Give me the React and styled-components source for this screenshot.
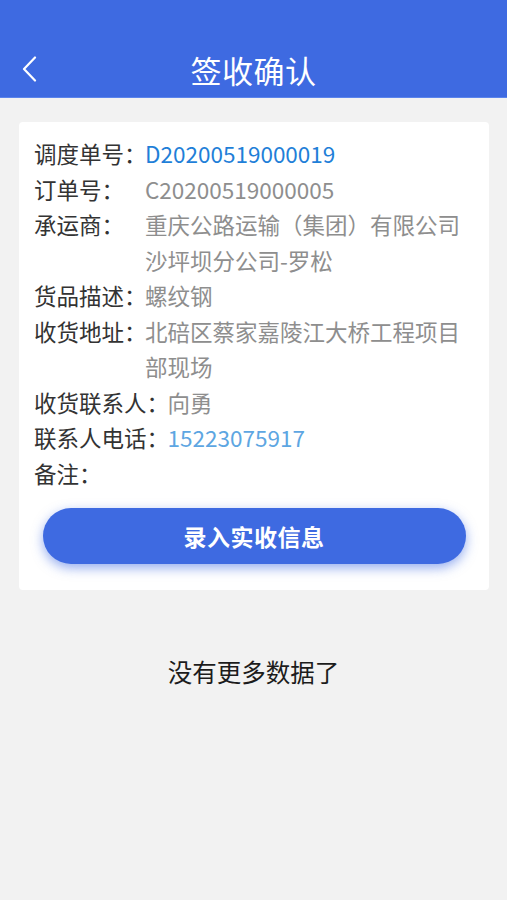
import React from "react";
import styled, { createGlobalStyle } from "styled-components";

const Global = createGlobalStyle`
  html, body { margin: 0; padding: 0; background: #f2f2f2; }
  body { font-family: "Noto Sans CJK SC", "Noto Sans", sans-serif; }
`;

const Page = styled.div`
  min-height: 900px;
  background: #f2f2f2;
`;

const Header = styled.header`
  background: #3e6ae1;
  padding-top: 41px;
  border-bottom: 1px solid #5b84ec;
`;

const TitleBar = styled.div`
  position: relative;
  height: 56px;
  display: flex;
  align-items: center;
  justify-content: center;
`;

const Title = styled.h1`
  margin: 0;
  color: #fff;
  font-size: 31px;
  font-weight: 400;
  letter-spacing: 0.5px;
`;

const Back = styled.button`
  position: absolute;
  left: 14px;
  top: 50%;
  transform: translateY(-50%);
  background: none;
  border: none;
  padding: 0 6px;
  display: flex;
`;

const Card = styled.section`
  margin: 24px 18px 0 19px;
  background: #fff;
  border-radius: 4px;
  padding: 14px 15px 26px 15px;
`;

const Row = styled.div`
  display: flex;
  font-size: 22.5px;
  line-height: 35.5px;
`;

const Label = styled.span`
  min-width: 112.5px;
  margin-right: -1.5px;
  color: #333;
  white-space: nowrap;
  flex-shrink: 0;
`;

const Value = styled.span`
  color: ${(p) => p.$color || "#8e8e8e"};
  flex: 1;
  word-break: break-all;
`;

const Button = styled.button`
  display: block;
  width: 423px;
  height: 56px;
  margin: 17px auto 0;
  border: none;
  border-radius: 28px;
  background: #3e6ae1;
  color: #fff;
  font-family: inherit;
  font-size: 23px;
  font-weight: 700;
  letter-spacing: 0.5px;
  box-shadow: 0 4px 12px rgba(62, 106, 225, 0.55);
`;

const Empty = styled.p`
  margin: 64px 0 0;
  text-align: center;
  font-size: 24.5px;
  color: #1c1c1c;
`;

const rows = [
  ["调度单号：", "D20200519000019", "#1f7fd8"],
  ["订单号：", "C20200519000005"],
  ["承运商：", "重庆公路运输（集团）有限公司沙坪坝分公司-罗松"],
  ["货品描述：", "螺纹钢"],
  ["收货地址：", "北碚区蔡家嘉陵江大桥工程项目部现场"],
  ["收货联系人：", "向勇"],
  ["联系人电话：", "15223075917", "#5da6e2"],
  ["备注：", ""],
];

export default function App() {
  return (
    <Page>
      <Global />
      <Header>
        <TitleBar>
          <Back aria-label="back">
            <svg width="18" height="26" viewBox="0 0 18 26">
              <path d="M15 1.5 L4 13 L15 24.5" fill="none" stroke="#fff" strokeWidth="2.2" strokeLinecap="round" strokeLinejoin="round" />
            </svg>
          </Back>
          <Title>签收确认</Title>
        </TitleBar>
      </Header>
      <Card>
        {rows.map(([l, v, c]) => (
          <Row key={l}>
            <Label>{l}</Label>
            <Value $color={c}>{v}</Value>
          </Row>
        ))}
        <Button>录入实收信息</Button>
      </Card>
      <Empty>没有更多数据了</Empty>
    </Page>
  );
}
